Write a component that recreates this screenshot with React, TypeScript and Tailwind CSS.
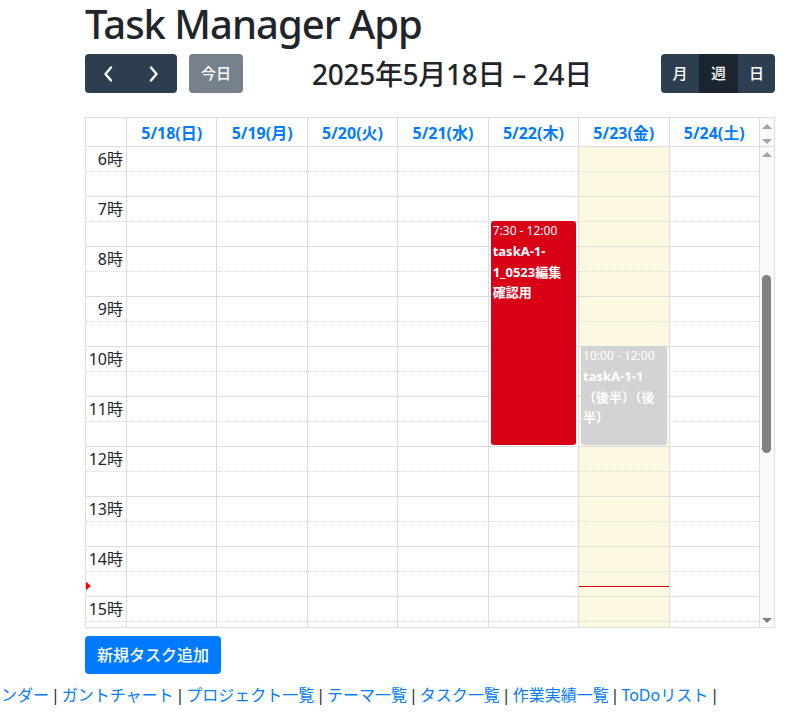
import React from 'react';

const days = [
  '5/18(日)',
  '5/19(月)',
  '5/20(火)',
  '5/21(水)',
  '5/22(木)',
  '5/23(金)',
  '5/24(土)',
];
const hours = [6, 7, 8, 9, 10, 11, 12, 13, 14, 15];
const TODAY = 5;

const links = ['カレンダー', 'ガントチャート', 'プロジェクト一覧', 'テーマ一覧', 'タスク一覧', '作業実績一覧', 'ToDoリスト'];

function Slots({ labels = false }: { labels?: boolean }) {
  return (
    <>
      {hours.map((h) => (
        <div key={h}>
          <div className="h-[25px] border-b border-dotted border-[#ddd] flex items-center justify-end pr-[3px] text-[16px] text-[#212529]">
            {labels ? `${h}時` : null}
          </div>
          <div className="h-[25px] border-b border-[#ddd]" />
        </div>
      ))}
    </>
  );
}

function Arrow({ dir, color }: { dir: 'up' | 'down'; color: string }) {
  return (
    <div
      className={`w-0 h-0 border-l-[5px] border-r-[5px] border-l-transparent border-r-transparent mx-auto ${
        dir === 'up' ? 'border-b-[5px]' : 'border-t-[5px]'
      }`}
      style={dir === 'up' ? { borderBottomColor: color } : { borderTopColor: color }}
    />
  );
}

function CalEvent({ top, height, bg, time, title }: { top: number; height: number; bg: string; time: string; title: string }) {
  return (
    <div
      className="absolute left-[2px] right-[2px] rounded-[3px] px-[2px] text-white overflow-hidden"
      style={{ top, height, background: bg }}
    >
      <div className="text-[12px] leading-[18px] mt-[1px] whitespace-nowrap">{time}</div>
      <div className="text-[13px] leading-[20.5px] font-bold mt-[1px]">{title}</div>
    </div>
  );
}

export default function App() {
  return (
    <div className="w-[793px] h-[724px] overflow-hidden bg-white text-[#212529] font-['Noto_Sans','Noto_Sans_CJK_JP',sans-serif]">
      <div className="w-[690px] ml-[85px]">
        <h1 className="text-[40px] leading-[48px] font-medium tracking-[-1px] mb-[6px] whitespace-nowrap">Task Manager App</h1>

        {/* toolbar */}
        <div className="flex justify-between items-center mb-[24px]">
          <div className="flex items-center gap-[12px]">
            <div className="flex rounded-[4px] overflow-hidden bg-[#2c3e50]">
              <button className="w-[46px] h-[39px] flex items-center justify-center">
                <svg width="10" height="16" viewBox="0 0 10 16" fill="none">
                  <path d="M8 1.5 L2.5 8 L8 14.5" stroke="white" strokeWidth="2.4" strokeLinecap="round" strokeLinejoin="round" />
                </svg>
              </button>
              <button className="w-[46px] h-[39px] flex items-center justify-center">
                <svg width="10" height="16" viewBox="0 0 10 16" fill="none">
                  <path d="M2 1.5 L7.5 8 L2 14.5" stroke="white" strokeWidth="2.4" strokeLinecap="round" strokeLinejoin="round" />
                </svg>
              </button>
            </div>
            <button className="w-[54px] h-[39px] rounded-[4px] bg-[#76818d] text-white text-[15px] font-medium">今日</button>
          </div>
          <h2 className="text-[28px] leading-[34px] font-medium tracking-[-0.3px]">2025年5月18日 – 24日</h2>
          <div className="flex rounded-[4px] overflow-hidden bg-[#2c3e50] text-white text-[15px] font-medium">
            <button className="w-[38px] h-[39px]">月</button>
            <button className="w-[39px] h-[39px] bg-[#1a252f]">週</button>
            <button className="w-[37px] h-[39px]">日</button>
          </div>
        </div>

        {/* calendar */}
        <div className="border border-[#ddd]">
          <div className="flex h-[29px] border-b border-[#ddd]">
            <div className="w-[41px] border-r border-[#ddd]" />
            {days.map((d) => (
              <div
                key={d}
                className="flex-1 border-r border-[#ddd] flex items-center justify-center pt-[2px] text-[16px] font-bold text-[#007bff]"
              >
                {d}
              </div>
            ))}
            <div className="w-[14px] bg-[#fafafa] flex flex-col pt-[6px] gap-[10px]">
              <Arrow dir="up" color="#a3a3a3" />
              <Arrow dir="down" color="#a3a3a3" />
            </div>
          </div>

          <div className="flex h-[480px] overflow-hidden">
            <div className="w-[41px] border-r border-[#ddd] relative">
              <Slots labels />
              <div className="absolute left-[-1px] top-[434px] w-0 h-0 border-t-[5px] border-b-[5px] border-l-[6px] border-t-transparent border-b-transparent border-l-[#ff0000]" />
            </div>
            {days.map((d, i) => (
              <div key={d} className={`flex-1 border-r border-[#ddd] relative ${i === TODAY ? 'bg-[#fdf8e0]' : ''}`}>
                <Slots />
                {i === 4 && (
                  <CalEvent top={74} height={224} bg="#d80017" time="7:30 - 12:00" title="taskA-1-1_0523編集確認用" />
                )}
                {i === 5 && (
                  <>
                    <CalEvent top={199} height={99} bg="#d3d3d3" time="10:00 - 12:00" title="taskA-1-1（後半）（後半）" />
                    <div className="absolute left-0 right-0 top-[439px] h-px bg-[#e00000]" />
                  </>
                )}
              </div>
            ))}
            <div className="w-[14px] bg-[#fafafa] flex flex-col pt-[5px] pb-[4px]">
              <Arrow dir="up" color="#a3a3a3" />
              <div className="mt-[118px] h-[178px] w-[9px] mx-auto rounded-full bg-[#808080]" />
              <div className="flex-1" />
              <Arrow dir="down" color="#808080" />
            </div>
          </div>
        </div>

        <button className="mt-[8px] h-[38px] px-[12px] rounded-[4px] bg-[#007bff] text-white text-[16px] font-medium">
          新規タスク追加
        </button>
      </div>

      <div className="w-[719px] flex justify-end mt-[9px]">
        <div className="whitespace-nowrap text-[16px] leading-[24px] [word-spacing:-2.2px]">
          {links.map((l) => (
            <span key={l}>
              <a className="text-[#007bff]">{l}</a>
              <span> | </span>
            </span>
          ))}
        </div>
      </div>
    </div>
  );
}
